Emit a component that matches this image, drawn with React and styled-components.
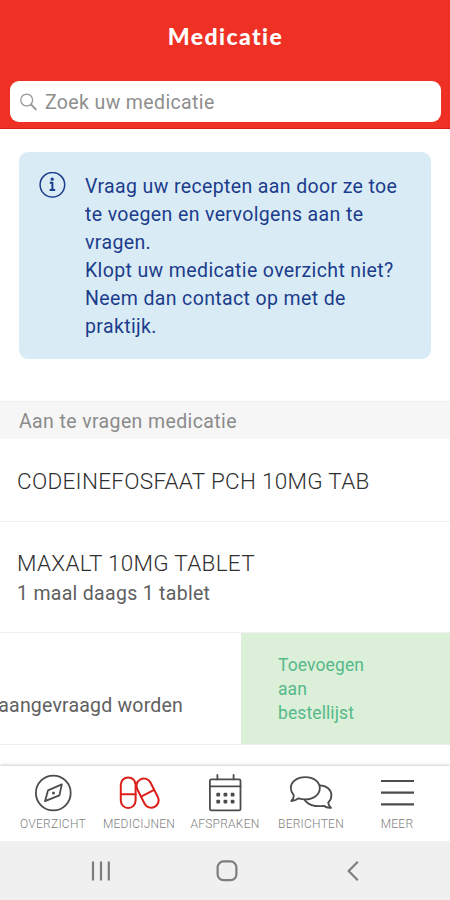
import React, { useState } from "react";
import styled, { createGlobalStyle } from "styled-components";

const GlobalStyle = createGlobalStyle`
  * {
    box-sizing: border-box;
  }
  body {
    margin: 0;
    background-color: #ffffff;
    font-family: Roboto, "Liberation Sans", sans-serif;
  }
`;

const Screen = styled.div`
  width: 450px;
  height: 900px;
  display: flex;
  flex-direction: column;
  overflow: hidden;
  background-color: #ffffff;
`;

const Header = styled.header`
  flex: none;
  height: 129px;
  display: flex;
  flex-direction: column;
  padding: 0 9px 6px 10px;
  background-color: #ee3124;
  border-bottom: 1px solid #dc1c10;
`;

const Title = styled.h1`
  flex: none;
  height: 81px;
  margin: 0;
  padding: 21px 0 0;
  text-align: center;
  font-family: Lato, sans-serif;
  font-size: 23px;
  line-height: 30px;
  font-weight: 900;
  letter-spacing: 1.4px;
  color: #ffffff;
`;

const SearchBox = styled.label`
  height: 41px;
  display: flex;
  align-items: center;
  gap: 8px;
  padding: 1px 10px 0;
  border-radius: 9px;
  background-color: #ffffff;
`;

const SearchInput = styled.input`
  flex: 1;
  min-width: 0;
  padding: 0;
  border: none;
  outline: none;
  background: transparent;
  font-family: inherit;
  font-size: 19.5px;
  letter-spacing: 0.37px;
  color: #555555;
  &::placeholder {
    color: #8e8e8e;
    opacity: 1;
  }
`;

const Content = styled.main`
  flex: 1;
  min-height: 0;
  display: flex;
  flex-direction: column;
`;

const InfoCard = styled.section`
  flex: none;
  height: 207px;
  margin: 23px 19px 42px;
  padding: 20px;
  display: flex;
  gap: 19px;
  border-radius: 9px;
  background-color: #d9ecf5;
`;

const InfoText = styled.p`
  margin: 0;
  padding-top: 1px;
  font-size: 19.5px;
  line-height: 28px;
  letter-spacing: 0.37px;
  white-space: nowrap;
  color: #1c3c8c;
`;

const SectionTitle = styled.h2`
  flex: none;
  height: 38px;
  margin: 0;
  padding: 0 19px;
  border-top: 1px solid #eeeeee;
  background-color: #f6f6f6;
  font-size: 19.5px;
  line-height: 39px;
  font-weight: 400;
  letter-spacing: 0.38px;
  color: #8b8b8b;
`;

const Row = styled.div`
  flex: none;
  height: ${({ $height }) => $height}px;
  padding: 2px 17px 0;
  display: flex;
  flex-direction: column;
  justify-content: center;
  gap: 2px;
  border-bottom: 1px solid #f0f0f0;
`;

const MedName = styled.div`
  font-size: 22.5px;
  line-height: 30px;
  font-weight: 300;
  letter-spacing: 0.3px;
  white-space: nowrap;
  color: #303030;
`;

const MedNote = styled.div`
  font-size: 19.5px;
  line-height: 28px;
  letter-spacing: ${({ $spacing }) => $spacing || 0.2}px;
  white-space: nowrap;
  color: #606060;
`;

const SwipeRow = styled.div`
  flex: none;
  height: 112px;
  display: flex;
  border-bottom: 1px solid #ececec;
`;

const SwipedPart = styled.div`
  width: 241px;
  display: flex;
  align-items: flex-end;
  justify-content: flex-end;
  padding: 0 58px 24px 0;
  overflow: hidden;
`;

const AddButton = styled.button`
  flex: 1;
  padding: 1px 60px 0 37px;
  border: none;
  background-color: #dcefd8;
  font-family: inherit;
  font-size: 17.5px;
  line-height: 24px;
  letter-spacing: 0.1px;
  text-align: left;
  color: #55b98a;
  cursor: pointer;
`;

const TabBar = styled.nav`
  flex: none;
  height: 75px;
  display: flex;
  padding: 7px 10px 0;
  background-color: #ffffff;
  box-shadow: 0 -1px 3px rgba(0, 0, 0, 0.2);
`;

const Tab = styled.button`
  width: 86px;
  padding: 0;
  display: flex;
  flex-direction: column;
  align-items: center;
  border: none;
  background: transparent;
  color: ${({ $active }) => ($active ? "#dc1f1a" : "#4c4c4c")};
  cursor: pointer;
`;

const TabLabel = styled.span`
  margin-top: 3px;
  font-family: Roboto, sans-serif;
  font-size: 12px;
  line-height: 16px;
  font-weight: 300;
  letter-spacing: 0.25px;
  color: #808080;
`;

const SystemBar = styled.footer`
  flex: none;
  height: 59px;
  display: flex;
  align-items: center;
  padding-left: 38px;
  background-color: #f0f0f0;
`;

const SystemButton = styled.button`
  width: 126px;
  padding: 0;
  display: flex;
  justify-content: center;
  border: none;
  background: transparent;
  color: #7d7d7d;
`;

const Icon = styled.svg`
  flex: none;
  display: block;
  fill: none;
  stroke: currentColor;
  stroke-width: ${({ $stroke }) => $stroke || 1.8};
  stroke-linecap: ${({ $cap }) => $cap || "round"};
  stroke-linejoin: round;
`;

const SearchIcon = styled(Icon)`
  color: #999999;
`;

const InfoIcon = styled(Icon)`
  color: #1c3c8c;
`;

const CompassIcon = () => (
  <Icon width="44" height="40" viewBox="0 0 44 40">
    <circle cx="22.3" cy="20" r="17.4" />
    <path d="M30.8 11.4 28.4 22.4 14 28.2 17 17.4Z" />
    <circle cx="22.5" cy="20" r="1.5" fill="currentColor" stroke="none" />
  </Icon>
);

const PillsIcon = () => (
  <Icon width="44" height="40" viewBox="0 0 44 40" $stroke={2}>
    <rect x="3.8" y="4.4" width="14.8" height="30.6" rx="7.4" />
    <path d="M3.8 21.2h14.8" />
    <g transform="rotate(-27 30.6 20.2)">
      <rect x="23.2" y="4.6" width="14.8" height="31" rx="7.4" />
      <path d="M23.2 20.2h14.8" />
    </g>
  </Icon>
);

const CalendarIcon = () => (
  <Icon width="44" height="40" viewBox="0 0 44 40">
    <rect x="6.9" y="6.4" width="30.6" height="31" rx="1.5" />
    <path d="M6.9 13.4h30.6M14.4 2v4.4M30.6 2v4.4" />
    {[15.2, 22.4, 29.6].map((x) => (
      <g key={x} fill="currentColor" stroke="none">
        <rect x={x - 1.9} y="19.8" width="3.8" height="3.8" rx="1" />
        <rect x={x - 1.9} y="26.8" width="3.8" height="3.8" rx="1" />
      </g>
    ))}
  </Icon>
);

// front bubble bottom-left tail, back bubble peeks out on the right
const ChatIcon = () => (
  <Icon width="44" height="40" viewBox="0 0 44 40">
    <path d="M4.8 22.3C2.9 20.1 1.8 17.8 1.8 15 1.8 8.8 8 4.2 16.3 4.2S30.8 8.9 30.8 15.2 24.4 26.4 16.3 26.4C13.8 26.4 11.6 26 9.6 25.3 7.6 26.8 5.3 28 2.3 28 4 26.5 4.9 24.4 4.8 22.3Z" />
    <path d="M30.6 12.4C37.6 12.4 42.4 16.8 42.4 22.2 42.4 25.2 41.2 27.7 39.2 29.7 39.4 31.7 40.6 33.4 42 34.8 38.8 35 36.3 34.2 34.6 32.8 25.7 34.2 18.2 31.4 15.6 26.8" />
  </Icon>
);

const MenuIcon = () => (
  <Icon width="44" height="40" viewBox="0 0 44 40" $stroke={2.2} $cap="butt">
    <path d="M6 8h33M6 19.7h33M6 31.3h33" />
  </Icon>
);

const tabs = [
  { label: "OVERZICHT", icon: CompassIcon },
  { label: "MEDICIJNEN", icon: PillsIcon },
  { label: "AFSPRAKEN", icon: CalendarIcon },
  { label: "BERICHTEN", icon: ChatIcon },
  { label: "MEER", icon: MenuIcon },
];

const App = () => {
  const [query, setQuery] = useState("");
  const [active, setActive] = useState("MEDICIJNEN");

  return (
    <>
      <GlobalStyle />
      <Screen>
        <Header>
          <Title>Medicatie</Title>
          <SearchBox>
            <SearchIcon width="17" height="18" viewBox="0 0 17 18" $stroke={1.3}>
              <circle cx="6.7" cy="7" r="5.9" />
              <path d="M11 11.5 15.8 16.4" strokeWidth="2" />
            </SearchIcon>
            <SearchInput
              type="text"
              value={query}
              onChange={(e) => setQuery(e.target.value)}
              placeholder="Zoek uw medicatie"
            />
          </SearchBox>
        </Header>

        <Content>
          <InfoCard>
            <InfoIcon width="27" height="27" viewBox="0 0 27 27" $stroke={1.5}>
              <circle cx="13.4" cy="12.8" r="12.3" />
              <path d="M10.8 10.8h2.6v7.2M10.6 17.9h5.6" strokeWidth="2" strokeLinecap="butt" />
              <circle cx="13.2" cy="7.2" r="1.6" fill="currentColor" stroke="none" />
            </InfoIcon>
            <InfoText>
              Vraag uw recepten aan door ze toe
              <br />
              te voegen en vervolgens aan te
              <br />
              vragen.
              <br />
              Klopt uw medicatie overzicht niet?
              <br />
              Neem dan contact op met de
              <br />
              praktijk.
            </InfoText>
          </InfoCard>

          <SectionTitle>Aan te vragen medicatie</SectionTitle>
          <Row $height={83}>
            <MedName>CODEINEFOSFAAT PCH 10MG TAB</MedName>
          </Row>
          <Row $height={111}>
            <MedName>MAXALT 10MG TABLET</MedName>
            <MedNote $spacing={0.3}>1 maal daags 1 tablet</MedNote>
          </Row>
          <SwipeRow>
            <SwipedPart>
              <MedNote>aangevraagd worden</MedNote>
            </SwipedPart>
            <AddButton>
              Toevoegen
              <br />
              aan
              <br />
              bestellijst
            </AddButton>
          </SwipeRow>
        </Content>

        <TabBar>
          {tabs.map(({ label, icon: TabIcon }) => (
            <Tab key={label} $active={label === active} onClick={() => setActive(label)}>
              <TabIcon />
              <TabLabel>{label}</TabLabel>
            </Tab>
          ))}
        </TabBar>

        <SystemBar>
          <SystemButton>
            <Icon width="22" height="22" viewBox="0 0 22 22" $stroke={2.2} $cap="butt">
              <path d="M3 1.5v19M11 1.5v19M18.8 1.5v19" />
            </Icon>
          </SystemButton>
          <SystemButton>
            <Icon width="22" height="22" viewBox="0 0 22 22" $stroke={2.2}>
              <rect x="1.6" y="1.4" width="18.8" height="18.8" rx="6" />
            </Icon>
          </SystemButton>
          <SystemButton>
            <Icon width="22" height="22" viewBox="0 0 22 22" $stroke={2.2} $cap="butt">
              <path d="M15.8 1.8 6.6 11 15.8 20.2" />
            </Icon>
          </SystemButton>
        </SystemBar>
      </Screen>
    </>
  );
};

export default App;
